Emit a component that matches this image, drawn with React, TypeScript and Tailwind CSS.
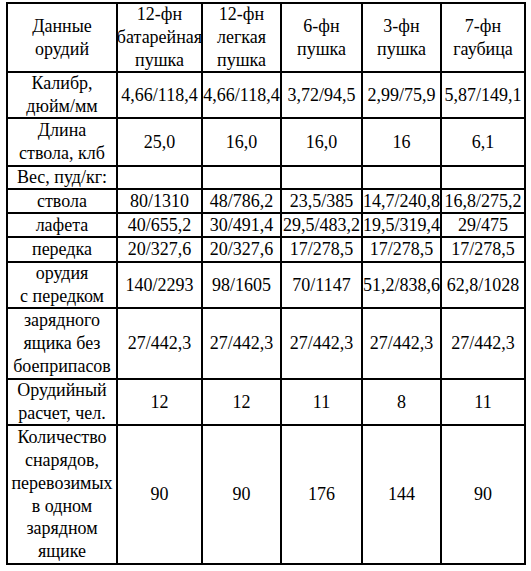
import React from "react";

const header: string[][] = [
  ["Данные", "орудий"],
  ["12-фн", "батарейная", "пушка"],
  ["12-фн", "легкая", "пушка"],
  ["6-фн", "пушка"],
  ["3-фн", "пушка"],
  ["7-фн", "гаубица"],
];

const rows: { label: string[]; values: string[] }[] = [
  { label: ["Калибр,", "дюйм/мм"], values: ["4,66/118,4", "4,66/118,4", "3,72/94,5", "2,99/75,9", "5,87/149,1"] },
  { label: ["Длина", "ствола, клб"], values: ["25,0", "16,0", "16,0", "16", "6,1"] },
  { label: ["Вес, пуд/кг:"], values: ["", "", "", "", ""] },
  { label: ["ствола"], values: ["80/1310", "48/786,2", "23,5/385", "14,7/240,8", "16,8/275,2"] },
  { label: ["лафета"], values: ["40/655,2", "30/491,4", "29,5/483,2", "19,5/319,4", "29/475"] },
  { label: ["передка"], values: ["20/327,6", "20/327,6", "17/278,5", "17/278,5", "17/278,5"] },
  { label: ["орудия", "с передком"], values: ["140/2293", "98/1605", "70/1147", "51,2/838,6", "62,8/1028"] },
  { label: ["зарядного", "ящика без", "боеприпасов"], values: ["27/442,3", "27/442,3", "27/442,3", "27/442,3", "27/442,3"] },
  { label: ["Орудийный", "расчет, чел."], values: ["12", "12", "11", "8", "11"] },
  {
    label: ["Количество", "снарядов,", "перевозимых", "в одном", "зарядном", "ящике"],
    values: ["90", "90", "176", "144", "90"],
  },
];

function Cell({ lines }: { lines: string[] }) {
  return (
    <div className="bg-white flex flex-col items-center justify-center text-center whitespace-nowrap">
      {lines.map((l, i) => (
        <span key={i}>{l}</span>
      ))}
    </div>
  );
}

export default function App() {
  return (
    <div className="w-[531px] h-[571px] bg-white pl-[6px] pt-[2px] font-['Liberation_Serif','Times_New_Roman',serif]">
      <div className="grid w-[520px] bg-black gap-[2px] p-[2px] text-black text-[18px] leading-[22.8px] font-['Liberation_Serif','Times_New_Roman',serif] grid-cols-[108px_83px_77px_79px_77px_82px] grid-rows-[67px_44px_46px_21px_22px_22px_23px_44px_69px_44px_137px]">
        {header.map((h, i) => (
          <Cell key={"h" + i} lines={h} />
        ))}
        {rows.map((r, ri) => (
          <React.Fragment key={ri}>
            <Cell lines={r.label} />
            {r.values.map((v, vi) => (
              <Cell key={vi} lines={v ? [v] : []} />
            ))}
          </React.Fragment>
        ))}
      </div>
    </div>
  );
}
